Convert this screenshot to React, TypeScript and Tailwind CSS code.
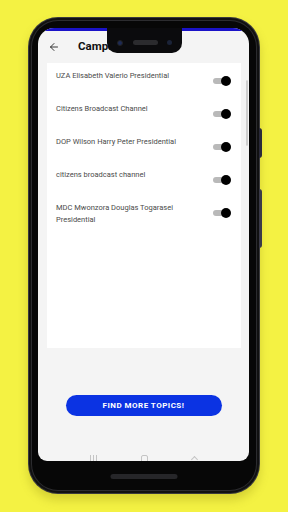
import React from "react";
import { ArrowLeft } from "lucide-react";

const topics = [
  "UZA Elisabeth Valerio Presidential",
  "Citizens Broadcast Channel",
  "DOP Wilson Harry Peter Presidential",
  "citizens broadcast channel",
  "MDC Mwonzora Douglas Togarasei Presidential",
];

function Toggle() {
  return (
    <div className="relative w-[18px] h-[10px] mt-[6px] mr-[10px] shrink-0">
      <div className="absolute left-0 top-[2px] w-[14px] h-[6px] rounded-full bg-[#b9b9b9]" />
      <div className="absolute right-0 top-0 w-[10px] h-[10px] rounded-full bg-black" />
    </div>
  );
}

export default function App() {
  return (
    <div
      className="w-[288px] h-[512px] bg-[#f4f243] overflow-hidden pt-[17px] pl-[28px]"
      style={{ fontFamily: "Roboto, 'Noto Sans', sans-serif" }}
    >
      {/* phone body */}
      <div className="relative w-[232px] h-[477px] rounded-[30px] bg-[#3a3a3d] p-[1px] shadow-[0_6px_10px_rgba(120,110,0,0.25)]">
        {/* side buttons */}
        <div className="absolute -right-[2px] top-[111px] w-[3px] h-[30px] rounded-r bg-[#2a2a3a]" />
        <div className="absolute -right-[2px] top-[172px] w-[3px] h-[59px] rounded-r bg-[#3a3a48]" />
        <div className="w-full h-full rounded-[29px] bg-[#111] p-[2px]">
          <div className="w-full h-full rounded-[27px] bg-[#2c2c2f] p-[1px]">
            <div className="relative w-full h-full rounded-[26px] bg-[#070707] pt-[7px] pl-[6px] pr-[7px] pb-[29px] flex flex-col">
              {/* screen */}
              <div className="relative flex-1 rounded-t-[16px] rounded-b-[9px] bg-[#f4f4f4] overflow-hidden flex flex-col">
                <div className="h-[3px] bg-[#1a12c8] shrink-0" />
                {/* notch */}
                <div className="absolute left-[69px] top-0 w-[75px] h-[25px] rounded-b-[10px] bg-[#0b0b0d] flex items-center justify-between px-[10px] pt-[4px]">
                  <div className="w-[6px] h-[6px] rounded-full bg-[#1d2a55] border border-[#222]" />
                  <div className="w-[25px] h-[5px] rounded-full bg-[#2b2b2e]" />
                  <div className="w-[5px] h-[5px] rounded-full bg-[#1b2338]" />
                </div>
                {/* header */}
                <div className="h-[33px] shrink-0 flex items-center pl-[10px] -mt-[1px]">
                  <ArrowLeft size={12} strokeWidth={1.8} className="text-[#222]" />
                  <span className="ml-[18px] text-[11.5px] font-bold text-[#111]">Campaign Topics</span>
                </div>
                {/* list */}
                <div className="relative ml-[9px] mr-[8px] h-[285px] bg-white pt-[7px] shrink-0">
                  {topics.map((t) => (
                    <div key={t} className="flex items-start justify-between h-[33px] pl-[9px]">
                      <span className="text-[7.5px] leading-[12px] text-[#4a4a4a] w-[130px]">{t}</span>
                      <Toggle />
                    </div>
                  ))}
                </div>
                {/* scroll indicator */}
                <div className="absolute right-[1px] top-[52px] w-[2px] h-[66px] rounded-full border border-[#cfcfcf]" />
                {/* button */}
                <div className="flex justify-center mt-[47px]">
                  <button className="w-[156px] h-[21px] rounded-full bg-[#0b33e3] text-white text-[8px] font-bold tracking-[0.06em]">
                    FIND MORE TOPICS!
                  </button>
                </div>
                {/* nav bar */}
                <div className="mt-auto h-[6px] flex items-start justify-around px-[30px]">
                  <div className="flex gap-[2px]">
                    <div className="w-[1px] h-[6px] bg-[#c4c4c4]" />
                    <div className="w-[1px] h-[6px] bg-[#c4c4c4]" />
                    <div className="w-[1px] h-[6px] bg-[#c4c4c4]" />
                  </div>
                  <div className="w-[7px] h-[8px] rounded-[2px] border border-[#c4c4c4]" />
                  <div className="w-[5px] h-[5px] border-l border-t border-[#c4c4c4] rotate-45 mt-[2px]" />
                </div>
              </div>
              {/* bottom speaker */}
              <div className="absolute left-1/2 -translate-x-1/2 bottom-[11px] w-[67px] h-[5px] rounded-full bg-[#262629]" />
            </div>
          </div>
        </div>
      </div>
    </div>
  );
}
